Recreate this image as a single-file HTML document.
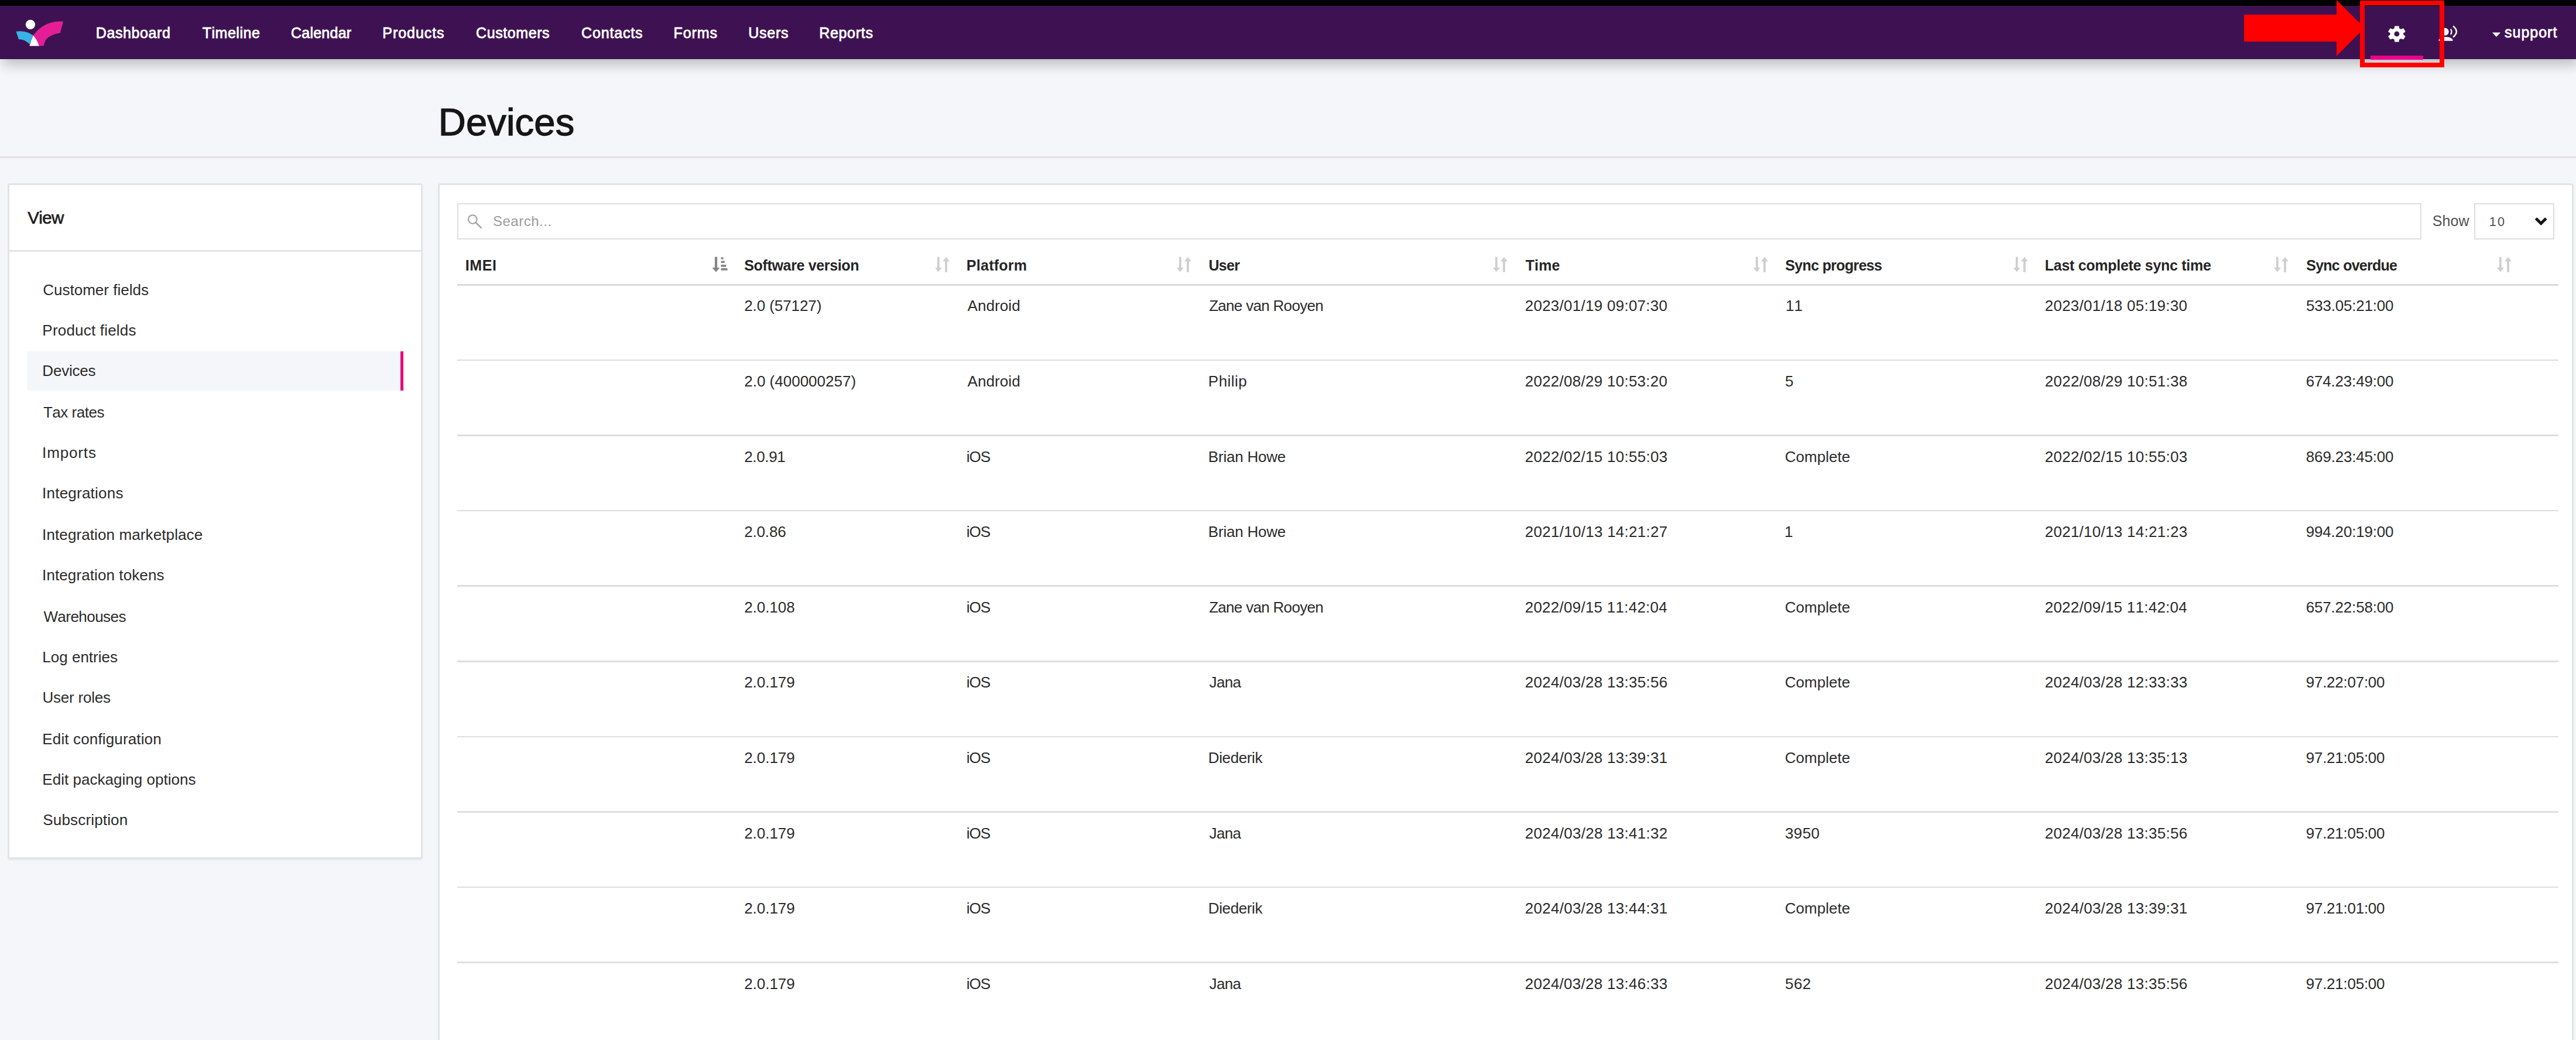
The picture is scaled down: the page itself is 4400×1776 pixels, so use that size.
<!DOCTYPE html>
<html><head><meta charset="utf-8"><title>Devices</title>
<style>
html,body{margin:0;padding:0;}
html,body{width:4400px;height:1776px;background:#f5f6fa;}
#root{position:relative;width:4400px;height:1776px;overflow:hidden;background:#f5f6fa;font-family:"Liberation Sans",sans-serif;font-kerning:none;}
.t{position:absolute;white-space:pre;display:block;}
.b{position:absolute;display:block;}
</style></head><body><div id="root">
<div class="b" style="left:0px;top:10px;width:4400px;height:91.4px;background:#3e1252;box-shadow:5px 8px 22px rgba(0,0,0,0.26);"></div>
<div class="b" style="left:0px;top:0px;width:4400px;height:10px;background:#000;"></div>
<svg class="b" style="left:0;top:0" width="140" height="101" viewBox="0 0 140 101">
<circle cx="51.9" cy="41.9" r="8.1" fill="#fff"/>
<path d="M27.5,53.7 Q43.8,51.2 56.9,60.6 Q52.6,67.5 50.6,75.6 Q41.7,66.4 31.9,67.2 Z" fill="#38b3e5"/>
<path d="M108.1,36.5 C92,35.7 72,39.3 56.9,60.6 Q63.5,68.5 66.9,78.4 L75,78.1 Q76.2,60.3 102.7,56.2 Z" fill="#e61e96"/>
<path d="M56.9,60.6 Q63.5,68.5 66.9,78.4 L50.4,78.4 Q52.5,69 56.9,60.6 Z" fill="#fff"/>
</svg>
<span class="t" style="left:163.75px;top:43.64px;font-size:25px;line-height:25px;color:#fff;letter-spacing:0.595px;-webkit-text-stroke:0.85px #fff;">Dashboard</span>
<span class="t" style="left:345.74px;top:43.64px;font-size:25px;line-height:25px;color:#fff;letter-spacing:0.515px;-webkit-text-stroke:0.85px #fff;">Timeline</span>
<span class="t" style="left:497.03px;top:43.64px;font-size:25px;line-height:25px;color:#fff;letter-spacing:0.233px;-webkit-text-stroke:0.85px #fff;">Calendar</span>
<span class="t" style="left:653.25px;top:43.64px;font-size:25px;line-height:25px;color:#fff;letter-spacing:0.957px;-webkit-text-stroke:0.85px #fff;">Products</span>
<span class="t" style="left:813.03px;top:43.64px;font-size:25px;line-height:25px;color:#fff;letter-spacing:0.589px;-webkit-text-stroke:0.85px #fff;">Customers</span>
<span class="t" style="left:993.03px;top:43.64px;font-size:25px;line-height:25px;color:#fff;letter-spacing:0.845px;-webkit-text-stroke:0.85px #fff;">Contacts</span>
<span class="t" style="left:1150.45px;top:43.64px;font-size:25px;line-height:25px;color:#fff;letter-spacing:0.957px;-webkit-text-stroke:0.85px #fff;">Forms</span>
<span class="t" style="left:1278.17px;top:43.64px;font-size:25px;line-height:25px;color:#fff;letter-spacing:0.787px;-webkit-text-stroke:0.85px #fff;">Users</span>
<span class="t" style="left:1399.15px;top:43.64px;font-size:25px;line-height:25px;color:#fff;letter-spacing:0.703px;-webkit-text-stroke:0.85px #fff;">Reports</span>
<span class="t" style="left:748.87px;top:176.28px;font-size:65px;line-height:65px;color:#161616;letter-spacing:0.183px;-webkit-text-stroke:1.3px #161616;">Devices</span>
<div class="b" style="left:0px;top:267px;width:4400px;height:2.5px;background:#e3e3e4;"></div>
<div class="b" style="left:13.3px;top:312.9px;width:708.4000000000001px;height:1153.6999999999998px;background:#fff;border:3.4px solid #e3e4e4;box-sizing:border-box;border-radius:4px;box-shadow:0 1.5px 2px rgba(0,0,0,0.05);"></div>
<span class="t" style="left:47.17px;top:357.43px;font-size:29.5px;line-height:29.5px;color:#1e1e1e;letter-spacing:-0.561px;-webkit-text-stroke:0.7px #1e1e1e;">View</span>
<div class="b" style="left:16px;top:426.6px;width:704px;height:3.3999999999999773px;background:#e3e4e4;"></div>
<div class="b" style="left:46px;top:600px;width:643px;height:66.5px;background:#f5f6fa;"></div>
<div class="b" style="left:684px;top:600px;width:5px;height:66.5px;background:#e6007e;"></div>
<span class="t" style="left:73.18px;top:481.99px;font-size:26px;line-height:26px;color:#2b2b2b;letter-spacing:0.010px;">Customer fields</span>
<span class="t" style="left:72.37px;top:550.99px;font-size:26px;line-height:26px;color:#2b2b2b;letter-spacing:0.196px;">Product fields</span>
<span class="t" style="left:72.37px;top:619.99px;font-size:26px;line-height:26px;color:#2b2b2b;letter-spacing:-0.233px;">Devices</span>
<span class="t" style="left:73.92px;top:690.99px;font-size:26px;line-height:26px;color:#2b2b2b;letter-spacing:-0.480px;">Tax rates</span>
<span class="t" style="left:72.10px;top:760.49px;font-size:26px;line-height:26px;color:#2b2b2b;letter-spacing:0.859px;">Imports</span>
<span class="t" style="left:72.10px;top:829.49px;font-size:26px;line-height:26px;color:#2b2b2b;letter-spacing:0.225px;">Integrations</span>
<span class="t" style="left:72.10px;top:899.99px;font-size:26px;line-height:26px;color:#2b2b2b;letter-spacing:0.107px;">Integration marketplace</span>
<span class="t" style="left:72.10px;top:968.99px;font-size:26px;line-height:26px;color:#2b2b2b;letter-spacing:0.097px;">Integration tokens</span>
<span class="t" style="left:74.39px;top:1039.99px;font-size:26px;line-height:26px;color:#2b2b2b;letter-spacing:-0.545px;">Warehouses</span>
<span class="t" style="left:72.37px;top:1108.99px;font-size:26px;line-height:26px;color:#2b2b2b;letter-spacing:-0.007px;">Log entries</span>
<span class="t" style="left:72.49px;top:1177.99px;font-size:26px;line-height:26px;color:#2b2b2b;letter-spacing:-0.225px;">User roles</span>
<span class="t" style="left:72.37px;top:1248.99px;font-size:26px;line-height:26px;color:#2b2b2b;letter-spacing:0.142px;">Edit configuration</span>
<span class="t" style="left:72.37px;top:1317.99px;font-size:26px;line-height:26px;color:#2b2b2b;letter-spacing:0.021px;">Edit packaging options</span>
<span class="t" style="left:73.32px;top:1386.99px;font-size:26px;line-height:26px;color:#2b2b2b;letter-spacing:0.163px;">Subscription</span>
<div class="b" style="left:747.9px;top:312.9px;width:3648.1px;height:1487.1px;background:#fff;border:3.4px solid #e3e4e4;box-sizing:border-box;border-radius:4px;"></div>
<div class="b" style="left:780.6px;top:347.4px;width:3355.6px;height:62.10000000000002px;background:#fff;border:2.6px solid #dfdfdf;box-sizing:border-box;"></div>
<svg class="b" style="left:795px;top:362px" width="34" height="32" viewBox="0 0 34 32">
<circle cx="12.3" cy="12.6" r="7.3" fill="none" stroke="#a6a6a6" stroke-width="2.3"/>
<path d="M17.8,18.2 L27.6,27.6" stroke="#a6a6a6" stroke-width="2.7" fill="none"/></svg>
<span class="t" style="left:841.91px;top:366.18px;font-size:24px;line-height:24px;color:#9c9c9c;letter-spacing:0.529px;">Search...</span>
<span class="t" style="left:4154.66px;top:365.34px;font-size:25px;line-height:25px;color:#505050;letter-spacing:0.113px;">Show</span>
<div class="b" style="left:4225.6px;top:347.4px;width:137.69999999999982px;height:62.10000000000002px;background:#fff;border:2.6px solid #dfdfdf;box-sizing:border-box;"></div>
<span class="t" style="left:4251.85px;top:368.22px;font-size:21.6px;line-height:21.6px;color:#505050;letter-spacing:2.263px;">10</span>
<svg class="b" style="left:4325px;top:366px" width="30" height="26" viewBox="0 0 30 26">
<path d="M6.5,7 L15.2,15.5 L23.9,7" stroke="#161616" stroke-width="5" fill="none"/></svg>
<span class="t" style="left:794.63px;top:440.84px;font-size:25px;line-height:25px;color:#262626;font-weight:700;letter-spacing:0.651px;">IMEI</span>
<svg class="b" style="left:1216px;top:436px" width="30" height="32" viewBox="0 0 30 32">
<path d="M7,2.6 V26" stroke="#858585" stroke-width="4.2" fill="none"/><path d="M0.4,21 H13.4 L7,28.8 Z" fill="#858585"/>
<path d="M15.5,3.2 h4 v3.6 h-4 Z M15.5,9.4 h6.2 v3.6 h-6.2 Z M15.5,16.1 h8.7 v3.6 h-8.7 Z M15.5,22.1 h11 v3.6 h-11 Z" fill="#858585"/></svg>
<span class="t" style="left:1271.28px;top:440.84px;font-size:25px;line-height:25px;color:#262626;font-weight:700;letter-spacing:-0.345px;">Software version</span>
<svg class="b" style="left:1597px;top:436px" width="28" height="32" viewBox="0 0 28 32">
<path d="M5.8,2.6 V26" stroke="#cfcfcf" stroke-width="3.8" fill="none"/><path d="M0,21 H11.8 L5.8,28.6 Z" fill="#cfcfcf"/>
<path d="M19,28.8 V5.4" stroke="#cfcfcf" stroke-width="3.8" fill="none"/><path d="M13.1,10.6 H24.9 L19,2.8 Z" fill="#cfcfcf"/></svg>
<span class="t" style="left:1650.83px;top:440.84px;font-size:25px;line-height:25px;color:#262626;font-weight:700;letter-spacing:0.260px;">Platform</span>
<svg class="b" style="left:2010px;top:436px" width="28" height="32" viewBox="0 0 28 32">
<path d="M5.8,2.6 V26" stroke="#cfcfcf" stroke-width="3.8" fill="none"/><path d="M0,21 H11.8 L5.8,28.6 Z" fill="#cfcfcf"/>
<path d="M19,28.8 V5.4" stroke="#cfcfcf" stroke-width="3.8" fill="none"/><path d="M13.1,10.6 H24.9 L19,2.8 Z" fill="#cfcfcf"/></svg>
<span class="t" style="left:2064.50px;top:440.84px;font-size:25px;line-height:25px;color:#262626;font-weight:700;letter-spacing:-0.737px;">User</span>
<svg class="b" style="left:2550px;top:436px" width="28" height="32" viewBox="0 0 28 32">
<path d="M5.8,2.6 V26" stroke="#cfcfcf" stroke-width="3.8" fill="none"/><path d="M0,21 H11.8 L5.8,28.6 Z" fill="#cfcfcf"/>
<path d="M19,28.8 V5.4" stroke="#cfcfcf" stroke-width="3.8" fill="none"/><path d="M13.1,10.6 H24.9 L19,2.8 Z" fill="#cfcfcf"/></svg>
<span class="t" style="left:2605.72px;top:440.84px;font-size:25px;line-height:25px;color:#262626;font-weight:700;letter-spacing:0.095px;">Time</span>
<svg class="b" style="left:2995px;top:436px" width="28" height="32" viewBox="0 0 28 32">
<path d="M5.8,2.6 V26" stroke="#cfcfcf" stroke-width="3.8" fill="none"/><path d="M0,21 H11.8 L5.8,28.6 Z" fill="#cfcfcf"/>
<path d="M19,28.8 V5.4" stroke="#cfcfcf" stroke-width="3.8" fill="none"/><path d="M13.1,10.6 H24.9 L19,2.8 Z" fill="#cfcfcf"/></svg>
<span class="t" style="left:3049.28px;top:440.84px;font-size:25px;line-height:25px;color:#262626;font-weight:700;letter-spacing:-0.661px;">Sync progress</span>
<svg class="b" style="left:3439px;top:436px" width="28" height="32" viewBox="0 0 28 32">
<path d="M5.8,2.6 V26" stroke="#cfcfcf" stroke-width="3.8" fill="none"/><path d="M0,21 H11.8 L5.8,28.6 Z" fill="#cfcfcf"/>
<path d="M19,28.8 V5.4" stroke="#cfcfcf" stroke-width="3.8" fill="none"/><path d="M13.1,10.6 H24.9 L19,2.8 Z" fill="#cfcfcf"/></svg>
<span class="t" style="left:3492.83px;top:440.84px;font-size:25px;line-height:25px;color:#262626;font-weight:700;letter-spacing:-0.289px;">Last complete sync time</span>
<svg class="b" style="left:3884px;top:436px" width="28" height="32" viewBox="0 0 28 32">
<path d="M5.8,2.6 V26" stroke="#cfcfcf" stroke-width="3.8" fill="none"/><path d="M0,21 H11.8 L5.8,28.6 Z" fill="#cfcfcf"/>
<path d="M19,28.8 V5.4" stroke="#cfcfcf" stroke-width="3.8" fill="none"/><path d="M13.1,10.6 H24.9 L19,2.8 Z" fill="#cfcfcf"/></svg>
<span class="t" style="left:3939.28px;top:440.84px;font-size:25px;line-height:25px;color:#262626;font-weight:700;letter-spacing:-0.762px;">Sync overdue</span>
<svg class="b" style="left:4265px;top:436px" width="28" height="32" viewBox="0 0 28 32">
<path d="M5.8,2.6 V26" stroke="#cfcfcf" stroke-width="3.8" fill="none"/><path d="M0,21 H11.8 L5.8,28.6 Z" fill="#cfcfcf"/>
<path d="M19,28.8 V5.4" stroke="#cfcfcf" stroke-width="3.8" fill="none"/><path d="M13.1,10.6 H24.9 L19,2.8 Z" fill="#cfcfcf"/></svg>
<div class="b" style="left:780.7px;top:484.9px;width:3589.3px;height:2.8000000000000114px;background:#dadada;"></div>
<span class="t" style="left:1271.19px;top:509.49px;font-size:26px;line-height:26px;color:#2b2b2b;letter-spacing:-0.086px;">2.0 (57127)</span>
<span class="t" style="left:1652.45px;top:509.49px;font-size:26px;line-height:26px;color:#2b2b2b;letter-spacing:0.102px;">Android</span>
<span class="t" style="left:2065.17px;top:509.49px;font-size:26px;line-height:26px;color:#2b2b2b;letter-spacing:-0.695px;">Zane van Rooyen</span>
<span class="t" style="left:2604.69px;top:509.49px;font-size:26px;line-height:26px;color:#2b2b2b;letter-spacing:0.265px;">2023/01/19 09:07:30</span>
<span class="t" style="left:3050.02px;top:509.49px;font-size:26px;line-height:26px;color:#2b2b2b;">11</span>
<span class="t" style="left:3492.69px;top:509.49px;font-size:26px;line-height:26px;color:#2b2b2b;letter-spacing:0.265px;">2023/01/18 05:19:30</span>
<span class="t" style="left:3938.96px;top:509.49px;font-size:26px;line-height:26px;color:#2b2b2b;letter-spacing:-0.205px;">533.05:21:00</span>
<div class="b" style="left:780.7px;top:613.6px;width:3589.3px;height:2.6000000000000227px;background:#dedede;"></div>
<span class="t" style="left:1271.19px;top:638.09px;font-size:26px;line-height:26px;color:#2b2b2b;letter-spacing:0.007px;">2.0 (400000257)</span>
<span class="t" style="left:1652.45px;top:638.09px;font-size:26px;line-height:26px;color:#2b2b2b;letter-spacing:0.102px;">Android</span>
<span class="t" style="left:2063.87px;top:638.09px;font-size:26px;line-height:26px;color:#2b2b2b;letter-spacing:0.427px;">Philip</span>
<span class="t" style="left:2604.69px;top:638.09px;font-size:26px;line-height:26px;color:#2b2b2b;letter-spacing:0.265px;">2022/08/29 10:53:20</span>
<span class="t" style="left:3048.96px;top:638.09px;font-size:26px;line-height:26px;color:#2b2b2b;">5</span>
<span class="t" style="left:3492.69px;top:638.09px;font-size:26px;line-height:26px;color:#2b2b2b;letter-spacing:0.271px;">2022/08/29 10:51:38</span>
<span class="t" style="left:3938.68px;top:638.09px;font-size:26px;line-height:26px;color:#2b2b2b;letter-spacing:-0.180px;">674.23:49:00</span>
<div class="b" style="left:780.7px;top:742.2px;width:3589.3px;height:2.599999999999909px;background:#dedede;"></div>
<span class="t" style="left:1271.19px;top:766.69px;font-size:26px;line-height:26px;color:#2b2b2b;letter-spacing:-0.342px;">2.0.91</span>
<span class="t" style="left:1650.76px;top:766.69px;font-size:26px;line-height:26px;color:#2b2b2b;letter-spacing:-0.955px;">iOS</span>
<span class="t" style="left:2063.87px;top:766.69px;font-size:26px;line-height:26px;color:#2b2b2b;letter-spacing:-0.234px;">Brian Howe</span>
<span class="t" style="left:2604.69px;top:766.69px;font-size:26px;line-height:26px;color:#2b2b2b;letter-spacing:0.272px;">2022/02/15 10:55:03</span>
<span class="t" style="left:3048.68px;top:766.69px;font-size:26px;line-height:26px;color:#2b2b2b;letter-spacing:0.029px;">Complete</span>
<span class="t" style="left:3492.69px;top:766.69px;font-size:26px;line-height:26px;color:#2b2b2b;letter-spacing:0.272px;">2022/02/15 10:55:03</span>
<span class="t" style="left:3938.87px;top:766.69px;font-size:26px;line-height:26px;color:#2b2b2b;letter-spacing:-0.197px;">869.23:45:00</span>
<div class="b" style="left:780.7px;top:870.8px;width:3589.3px;height:2.6000000000000227px;background:#dedede;"></div>
<span class="t" style="left:1271.19px;top:895.29px;font-size:26px;line-height:26px;color:#2b2b2b;letter-spacing:-0.167px;">2.0.86</span>
<span class="t" style="left:1650.76px;top:895.29px;font-size:26px;line-height:26px;color:#2b2b2b;letter-spacing:-0.955px;">iOS</span>
<span class="t" style="left:2063.87px;top:895.29px;font-size:26px;line-height:26px;color:#2b2b2b;letter-spacing:-0.234px;">Brian Howe</span>
<span class="t" style="left:2604.69px;top:895.29px;font-size:26px;line-height:26px;color:#2b2b2b;letter-spacing:0.281px;">2021/10/13 14:21:27</span>
<span class="t" style="left:3048.02px;top:895.29px;font-size:26px;line-height:26px;color:#2b2b2b;">1</span>
<span class="t" style="left:3492.69px;top:895.29px;font-size:26px;line-height:26px;color:#2b2b2b;letter-spacing:0.272px;">2021/10/13 14:21:23</span>
<span class="t" style="left:3938.78px;top:895.29px;font-size:26px;line-height:26px;color:#2b2b2b;letter-spacing:-0.189px;">994.20:19:00</span>
<div class="b" style="left:780.7px;top:999.4px;width:3589.3px;height:2.6000000000000227px;background:#dedede;"></div>
<span class="t" style="left:1271.19px;top:1023.89px;font-size:26px;line-height:26px;color:#2b2b2b;letter-spacing:-0.052px;">2.0.108</span>
<span class="t" style="left:1650.76px;top:1023.89px;font-size:26px;line-height:26px;color:#2b2b2b;letter-spacing:-0.955px;">iOS</span>
<span class="t" style="left:2065.17px;top:1023.89px;font-size:26px;line-height:26px;color:#2b2b2b;letter-spacing:-0.695px;">Zane van Rooyen</span>
<span class="t" style="left:2604.69px;top:1023.89px;font-size:26px;line-height:26px;color:#2b2b2b;letter-spacing:0.251px;">2022/09/15 11:42:04</span>
<span class="t" style="left:3048.68px;top:1023.89px;font-size:26px;line-height:26px;color:#2b2b2b;letter-spacing:0.029px;">Complete</span>
<span class="t" style="left:3492.69px;top:1023.89px;font-size:26px;line-height:26px;color:#2b2b2b;letter-spacing:0.251px;">2022/09/15 11:42:04</span>
<span class="t" style="left:3938.68px;top:1023.89px;font-size:26px;line-height:26px;color:#2b2b2b;letter-spacing:-0.180px;">657.22:58:00</span>
<div class="b" style="left:780.7px;top:1128.0px;width:3589.3px;height:2.599999999999909px;background:#dedede;"></div>
<span class="t" style="left:1271.19px;top:1152.49px;font-size:26px;line-height:26px;color:#2b2b2b;letter-spacing:-0.035px;">2.0.179</span>
<span class="t" style="left:1650.76px;top:1152.49px;font-size:26px;line-height:26px;color:#2b2b2b;letter-spacing:-0.955px;">iOS</span>
<span class="t" style="left:2065.59px;top:1152.49px;font-size:26px;line-height:26px;color:#2b2b2b;letter-spacing:-0.658px;">Jana</span>
<span class="t" style="left:2604.69px;top:1152.49px;font-size:26px;line-height:26px;color:#2b2b2b;letter-spacing:0.272px;">2024/03/28 13:35:56</span>
<span class="t" style="left:3048.68px;top:1152.49px;font-size:26px;line-height:26px;color:#2b2b2b;letter-spacing:0.029px;">Complete</span>
<span class="t" style="left:3492.69px;top:1152.49px;font-size:26px;line-height:26px;color:#2b2b2b;letter-spacing:0.272px;">2024/03/28 12:33:33</span>
<span class="t" style="left:3938.78px;top:1152.49px;font-size:26px;line-height:26px;color:#2b2b2b;letter-spacing:-0.262px;">97.22:07:00</span>
<div class="b" style="left:780.7px;top:1256.6px;width:3589.3px;height:2.6000000000001364px;background:#dedede;"></div>
<span class="t" style="left:1271.19px;top:1281.09px;font-size:26px;line-height:26px;color:#2b2b2b;letter-spacing:-0.035px;">2.0.179</span>
<span class="t" style="left:1650.76px;top:1281.09px;font-size:26px;line-height:26px;color:#2b2b2b;letter-spacing:-0.955px;">iOS</span>
<span class="t" style="left:2063.87px;top:1281.09px;font-size:26px;line-height:26px;color:#2b2b2b;letter-spacing:-0.396px;">Diederik</span>
<span class="t" style="left:2604.69px;top:1281.09px;font-size:26px;line-height:26px;color:#2b2b2b;letter-spacing:0.279px;">2024/03/28 13:39:31</span>
<span class="t" style="left:3048.68px;top:1281.09px;font-size:26px;line-height:26px;color:#2b2b2b;letter-spacing:0.029px;">Complete</span>
<span class="t" style="left:3492.69px;top:1281.09px;font-size:26px;line-height:26px;color:#2b2b2b;letter-spacing:0.272px;">2024/03/28 13:35:13</span>
<span class="t" style="left:3938.78px;top:1281.09px;font-size:26px;line-height:26px;color:#2b2b2b;letter-spacing:-0.262px;">97.21:05:00</span>
<div class="b" style="left:780.7px;top:1385.2px;width:3589.3px;height:2.599999999999909px;background:#dedede;"></div>
<span class="t" style="left:1271.19px;top:1409.69px;font-size:26px;line-height:26px;color:#2b2b2b;letter-spacing:-0.035px;">2.0.179</span>
<span class="t" style="left:1650.76px;top:1409.69px;font-size:26px;line-height:26px;color:#2b2b2b;letter-spacing:-0.955px;">iOS</span>
<span class="t" style="left:2065.59px;top:1409.69px;font-size:26px;line-height:26px;color:#2b2b2b;letter-spacing:-0.658px;">Jana</span>
<span class="t" style="left:2604.69px;top:1409.69px;font-size:26px;line-height:26px;color:#2b2b2b;letter-spacing:0.281px;">2024/03/28 13:41:32</span>
<span class="t" style="left:3049.01px;top:1409.69px;font-size:26px;line-height:26px;color:#2b2b2b;letter-spacing:0.389px;">3950</span>
<span class="t" style="left:3492.69px;top:1409.69px;font-size:26px;line-height:26px;color:#2b2b2b;letter-spacing:0.272px;">2024/03/28 13:35:56</span>
<span class="t" style="left:3938.78px;top:1409.69px;font-size:26px;line-height:26px;color:#2b2b2b;letter-spacing:-0.262px;">97.21:05:00</span>
<div class="b" style="left:780.7px;top:1513.8px;width:3589.3px;height:2.6000000000001364px;background:#dedede;"></div>
<span class="t" style="left:1271.19px;top:1538.29px;font-size:26px;line-height:26px;color:#2b2b2b;letter-spacing:-0.035px;">2.0.179</span>
<span class="t" style="left:1650.76px;top:1538.29px;font-size:26px;line-height:26px;color:#2b2b2b;letter-spacing:-0.955px;">iOS</span>
<span class="t" style="left:2063.87px;top:1538.29px;font-size:26px;line-height:26px;color:#2b2b2b;letter-spacing:-0.396px;">Diederik</span>
<span class="t" style="left:2604.69px;top:1538.29px;font-size:26px;line-height:26px;color:#2b2b2b;letter-spacing:0.279px;">2024/03/28 13:44:31</span>
<span class="t" style="left:3048.68px;top:1538.29px;font-size:26px;line-height:26px;color:#2b2b2b;letter-spacing:0.029px;">Complete</span>
<span class="t" style="left:3492.69px;top:1538.29px;font-size:26px;line-height:26px;color:#2b2b2b;letter-spacing:0.279px;">2024/03/28 13:39:31</span>
<span class="t" style="left:3938.78px;top:1538.29px;font-size:26px;line-height:26px;color:#2b2b2b;letter-spacing:-0.262px;">97.21:01:00</span>
<div class="b" style="left:780.7px;top:1642.4px;width:3589.3px;height:2.599999999999909px;background:#dedede;"></div>
<span class="t" style="left:1271.19px;top:1666.89px;font-size:26px;line-height:26px;color:#2b2b2b;letter-spacing:-0.035px;">2.0.179</span>
<span class="t" style="left:1650.76px;top:1666.89px;font-size:26px;line-height:26px;color:#2b2b2b;letter-spacing:-0.955px;">iOS</span>
<span class="t" style="left:2065.59px;top:1666.89px;font-size:26px;line-height:26px;color:#2b2b2b;letter-spacing:-0.658px;">Jana</span>
<span class="t" style="left:2604.69px;top:1666.89px;font-size:26px;line-height:26px;color:#2b2b2b;letter-spacing:0.272px;">2024/03/28 13:46:33</span>
<span class="t" style="left:3048.96px;top:1666.89px;font-size:26px;line-height:26px;color:#2b2b2b;letter-spacing:0.484px;">562</span>
<span class="t" style="left:3492.69px;top:1666.89px;font-size:26px;line-height:26px;color:#2b2b2b;letter-spacing:0.272px;">2024/03/28 13:35:56</span>
<span class="t" style="left:3938.78px;top:1666.89px;font-size:26px;line-height:26px;color:#2b2b2b;letter-spacing:-0.262px;">97.21:05:00</span>
<svg class="b" style="left:4074.6px;top:41.05px" width="37.8" height="33.9" viewBox="0 0 24 24" preserveAspectRatio="none">
<path fill="#fff" d="M19.14,12.94c0.04-0.3,0.06-0.61,0.06-0.94c0-0.32-0.02-0.64-0.07-0.94l2.03-1.58c0.18-0.14,0.23-0.41,0.12-0.61 l-1.92-3.32c-0.12-0.22-0.37-0.29-0.59-0.22l-2.39,0.96c-0.5-0.38-1.03-0.7-1.62-0.94L14.4,2.81c-0.04-0.24-0.24-0.41-0.48-0.41 h-3.84c-0.24,0-0.43,0.17-0.47,0.41L9.25,5.35C8.66,5.59,8.12,5.92,7.63,6.29L5.24,5.33c-0.22-0.08-0.47,0-0.59,0.22L2.74,8.87 C2.62,9.08,2.66,9.34,2.86,9.48l2.03,1.58C4.84,11.36,4.8,11.69,4.8,12s0.02,0.64,0.07,0.94l-2.03,1.58 c-0.18,0.14-0.23,0.41-0.12,0.61l1.92,3.32c0.12,0.22,0.37,0.29,0.59,0.22l2.39-0.96c0.5,0.38,1.03,0.7,1.62,0.94l0.36,2.54 c0.05,0.24,0.24,0.41,0.48,0.41h3.84c0.24,0,0.44-0.17,0.47-0.41l0.36-2.54c0.59-0.24,1.13-0.56,1.62-0.94l2.39,0.96 c0.22,0.08,0.47,0,0.59-0.22l1.92-3.32c0.12-0.22,0.07-0.47-0.12-0.61L19.14,12.94z"/><ellipse cx="12" cy="12" rx="2.8" ry="3.1" fill="#3e1252"/></svg>
<div class="b" style="left:4048.5px;top:95px;width:90.0px;height:6.5px;background:#ec008c;"></div>
<svg class="b" style="left:4163px;top:41px" width="38" height="32" viewBox="0 0 38 32">
<circle cx="13.3" cy="13.2" r="6.4" fill="#fff"/>
<path d="M2.3,28.8 Q2.8,21.9 14.5,21.9 Q26.3,21.9 26.8,28.8 Z" fill="#fff"/>
<path d="M22.8,8.6 Q26.4,13.2 22.8,18" stroke="#fff" stroke-width="2.2" fill="none"/>
<path d="M27,3.4 Q38.6,13 27,22.4" stroke="#fff" stroke-width="2.6" fill="none"/></svg>
<svg class="b" style="left:4256px;top:54px" width="16" height="10" viewBox="0 0 16 10"><path d="M1,1.6 H15 L8,9 Z" fill="#fff"/></svg>
<span class="t" style="left:4278.10px;top:43.14px;font-size:25px;line-height:25px;color:#fff;letter-spacing:0.982px;-webkit-text-stroke:0.85px #fff;">support</span>
<svg class="b" style="left:3820px;top:0" width="230" height="100" viewBox="0 0 230 100">
<path d="M13,25 H171 V0 L218.8,47.8 L171,95.6 V71 H13 Z" fill="#ff0000"/></svg>
<div class="b" style="left:4031px;top:1px;width:144px;height:114px;border:8px solid #ff0000;box-sizing:border-box;"></div>
</div></body></html>
